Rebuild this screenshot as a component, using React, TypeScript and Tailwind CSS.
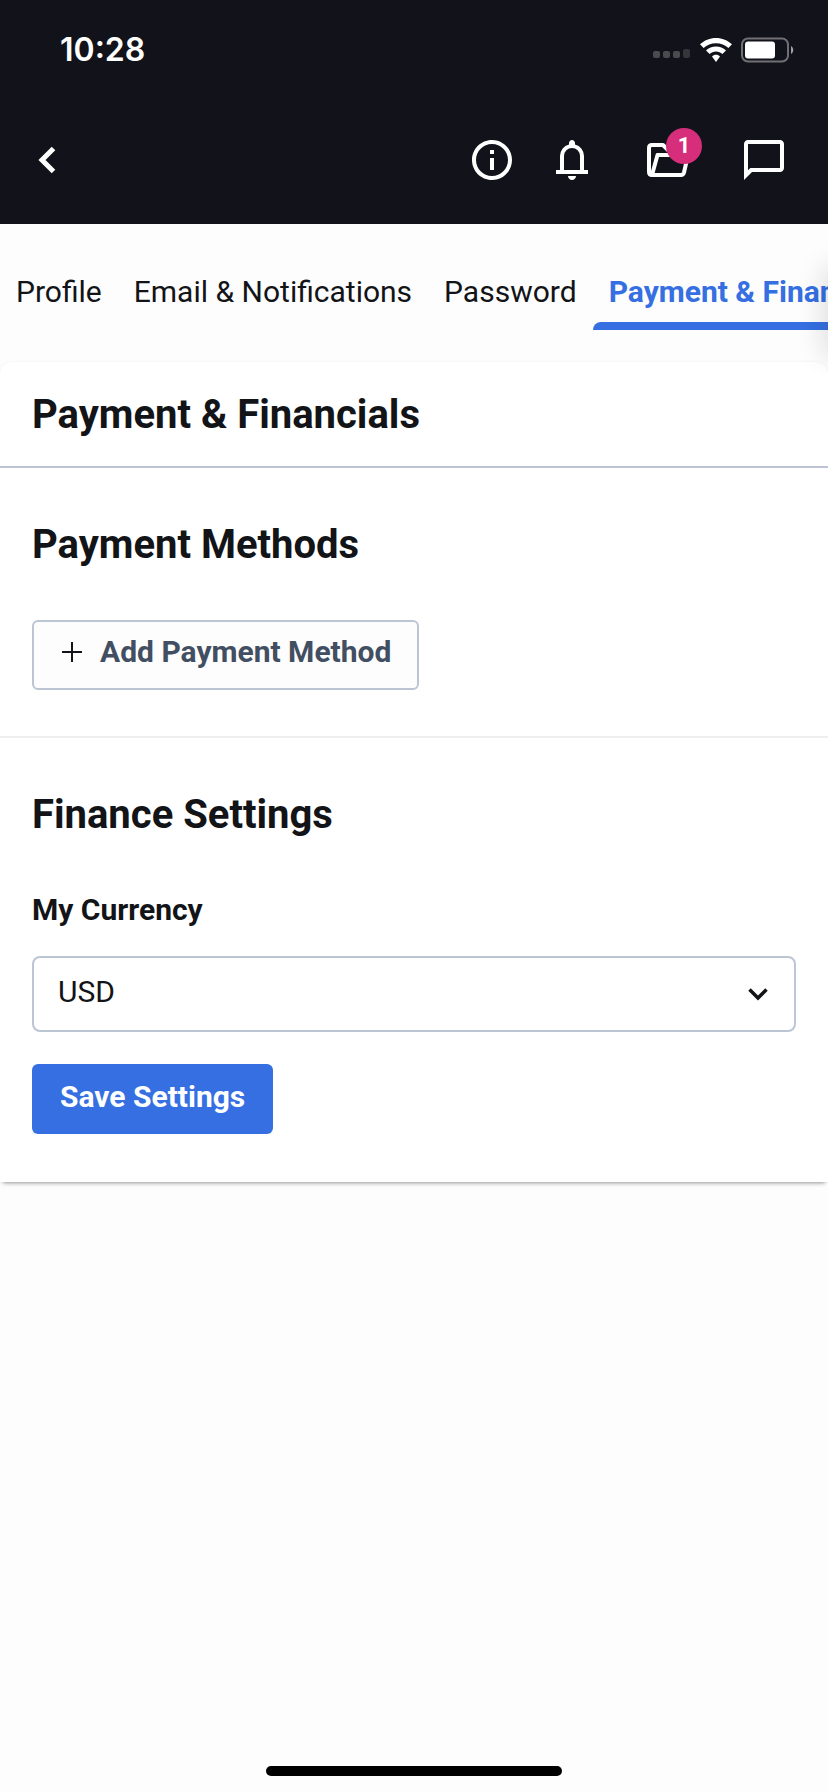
import { useState } from "react";

const tabs = ["Profile", "Email & Notifications", "Password", "Payment & Financials"];

const StatusBar = () => (
    <div className="flex items-center justify-between h-[100px] pl-[60px] pr-[34px]">
        <span className="font-['Inter',sans-serif] text-[32px] leading-8 font-semibold">10:28</span>
        <div className="flex items-center gap-2">
            <svg width="40" height="20" viewBox="0 0 40 20" fill="#4a4a4f">
                <rect x="1" y="11" width="7" height="7" rx="2" />
                <rect x="11" y="11" width="7" height="7" rx="2" />
                <rect x="21" y="11" width="7" height="7" rx="2" />
                <rect x="31" y="9" width="7" height="9" rx="2" fill="#35353b" />
            </svg>
            <svg width="32" height="24" viewBox="0 0 32 24" fill="#fff">
                <path d="M16 0C9.900 0 4.300 2.300 0 6.300L3.600 10C6.900 7 11.200 5.200 16 5.200S25.100 7 28.400 10L32 6.300C27.700 2.300 22.100 0 16 0Z" />
                <path d="M16 8.400C12.200 8.400 8.700 9.900 6 12.400L9.600 16C11.300 14.500 13.500 13.500 16 13.500S20.700 14.500 22.400 16L26 12.400C23.300 9.900 19.800 8.400 16 8.400Z" />
                <path d="M16 16.800C14.400 16.800 13 17.400 12 18.400L16 24L20 18.400C19 17.400 17.600 16.800 16 16.800Z" />
            </svg>
            <svg width="54" height="26" viewBox="0 0 54 26">
                <rect x="2" y="1.500" width="46" height="23" rx="6" fill="none" stroke="#707074" strokeWidth="2" />
                <rect x="5" y="4.500" width="30" height="17" rx="3" fill="#fff" />
                <path d="M51 9C54 10.500 54 15.500 51 17Z" fill="#a0a0a3" />
            </svg>
        </div>
    </div>
);

const HeaderActions = () => (
    <div className="flex items-center">
        <button aria-label="Information">
            <svg width="48" height="48" viewBox="0 0 24 24" fill="#fff">
                <path d="M11 7h2v2h-2zm0 4h2v6h-2zm1-9C6.480 2 2 6.480 2 12s4.480 10 10 10 10-4.480 10-10S17.520 2 12 2zm0 18c-4.410 0-8-3.590-8-8s3.590-8 8-8 8 3.590 8 8-3.590 8-8 8z" />
            </svg>
        </button>
        <button aria-label="Notifications" className="ml-8">
            <svg width="48" height="48" viewBox="0 -960 960 960" fill="#fff">
                <path d="M160-200v-80h80v-280q0-83 50-147.500T420-792v-28q0-25 17.500-42.500T480-880q25 0 42.500 17.500T540-820v28q80 20 130 84.500T720-560v280h80v80H160Zm320 120q-33 0-56.500-23.500T400-160h160q0 33-23.500 56.500T480-80ZM320-280h320v-280q0-66-47-113t-113-47q-66 0-113 47t-47 113v280Z" />
            </svg>
        </button>
        <button aria-label="Files, 1 new" className="relative ml-12">
            <svg width="48" height="48" viewBox="0 0 48 48" fill="none" stroke="#fff" strokeWidth="4" strokeLinejoin="round">
                <path d="M8 39Q5 39 5 36V12Q5 9 8 9H19L24 14H36Q39 14 39 18V20" />
                <path d="M8 39L13.500 19H44L40 36.500Q39.300 39 37 39H7" />
            </svg>
            <span className="absolute -top-2 left-[22px] flex items-center justify-center w-9 h-9 rounded-full bg-[#d62e7a] text-white text-[22px] leading-none font-bold">
                1
            </span>
        </button>
        <button aria-label="Messages" className="ml-12">
            <svg width="48" height="48" viewBox="0 -960 960 960" fill="#fff">
                <path d="M80-80v-720q0-33 23.500-56.500T160-880h640q33 0 56.500 23.500T880-800v480q0 33-23.500 56.500T800-240H240L80-80Zm126-240h594v-480H160v525l46-45Z" />
            </svg>
        </button>
    </div>
);

export default function App() {
    const [activeTab, setActiveTab] = useState("Payment & Financials");
    const [currency, setCurrency] = useState("USD");

    return (
        <div className="flex flex-col min-h-screen overflow-hidden bg-[#fdfdfd] text-[#121417] font-['Roboto',sans-serif]">
            <header className="bg-[#12131a] text-white">
                <StatusBar />
                <div className="flex items-center justify-between h-[124px] pl-6 pr-10 pb-1">
                    <button aria-label="Back">
                        <svg width="48" height="48" viewBox="0 0 48 48" fill="none" stroke="#fff" strokeWidth="5">
                            <path d="M29.500 12.500L18 24L29.500 35.500" />
                        </svg>
                    </button>
                    <HeaderActions />
                </div>
            </header>

            <div className="relative">
                <nav className="flex pt-10 pb-8 overflow-x-auto overflow-y-hidden [scrollbar-width:none] whitespace-nowrap">
                    {tabs.map((tab) => (
                        <button
                            key={tab}
                            onClick={() => setActiveTab(tab)}
                            className={`relative shrink-0 h-[66px] px-4 pb-[11px] text-[30px] leading-[55px] ${activeTab === tab ? 'font-bold text-[#356fe2]' : ''}`}
                        >
                            {tab}
                            {activeTab === tab && (
                                <span className="absolute inset-x-0 bottom-0 h-2 rounded-t-lg bg-[#356fe2]" />
                            )}
                        </button>
                    ))}
                </nav>
                {/* Hint that the tabs scroll sideways */}
                <div className="absolute left-full top-12 z-10 w-8 h-20 shadow-[0_0_28px_4px_rgba(18,19,26,0.14)]" />
            </div>

            <main className="rounded-t-xl bg-white shadow-[0_0_3px_rgba(0,0,0,0.06),0_4px_4px_-3px_rgba(0,0,0,0.4)]">
                <h1 className="px-8 pt-[29px] pb-[27px] border-b-2 border-[#bfc3d6] text-[40px] leading-[48px] font-bold">
                    Payment & Financials
                </h1>

                <section className="px-8 pt-[53px] pb-[46px] border-b-2 border-[#eeeef0]">
                    <h2 className="text-[40px] leading-[48px] font-bold">Payment Methods</h2>
                    <button className="flex items-center gap-3.5 mt-[51px] h-[70px] pl-6 pr-[26px] pb-[6px] border-2 border-[#bcc5d3] rounded-md bg-[#fdfdfd] text-[#424e61] text-[30px] leading-9 font-bold">
                        <svg width="28" height="28" viewBox="0 0 28 28" fill="none" stroke="#121417" strokeWidth="2">
                            <path d="M14 4V24M4 14H24" />
                        </svg>
                        Add Payment Method
                    </button>
                </section>

                <section className="px-8 pt-[53px] pb-12">
                    <h2 className="text-[40px] leading-[48px] font-bold">Finance Settings</h2>
                    <label htmlFor="currency" className="block mt-[53px] text-[30px] leading-9 font-bold">My Currency</label>
                    <div className="relative mt-7">
                        <select
                            id="currency"
                            value={currency}
                            onChange={(e) => setCurrency(e.target.value)}
                            className="block w-full h-[76px] pl-6 pr-16 pb-1 appearance-none border-2 border-[#bcc5d3] rounded-lg bg-white text-[30px] leading-9"
                        >
                            <option>USD</option>
                            <option>EUR</option>
                            <option>GBP</option>
                        </select>
                        <svg className="absolute right-6 top-6 pointer-events-none" width="28" height="28" viewBox="0 0 28 28" fill="none" stroke="#121417" strokeWidth="3.500">
                            <path d="M5.500 9.500L14 18L22.500 9.500" />
                        </svg>
                    </div>
                    <button className="block mt-8 h-[70px] px-7 pb-[4px] rounded-md bg-[#356fe2] text-white text-[30px] leading-9 font-bold">
                        Save Settings
                    </button>
                </section>
            </main>

            <div className="mt-auto mx-auto mb-4 w-[296px] h-[10px] rounded-full bg-black" />
        </div>
    );
}
